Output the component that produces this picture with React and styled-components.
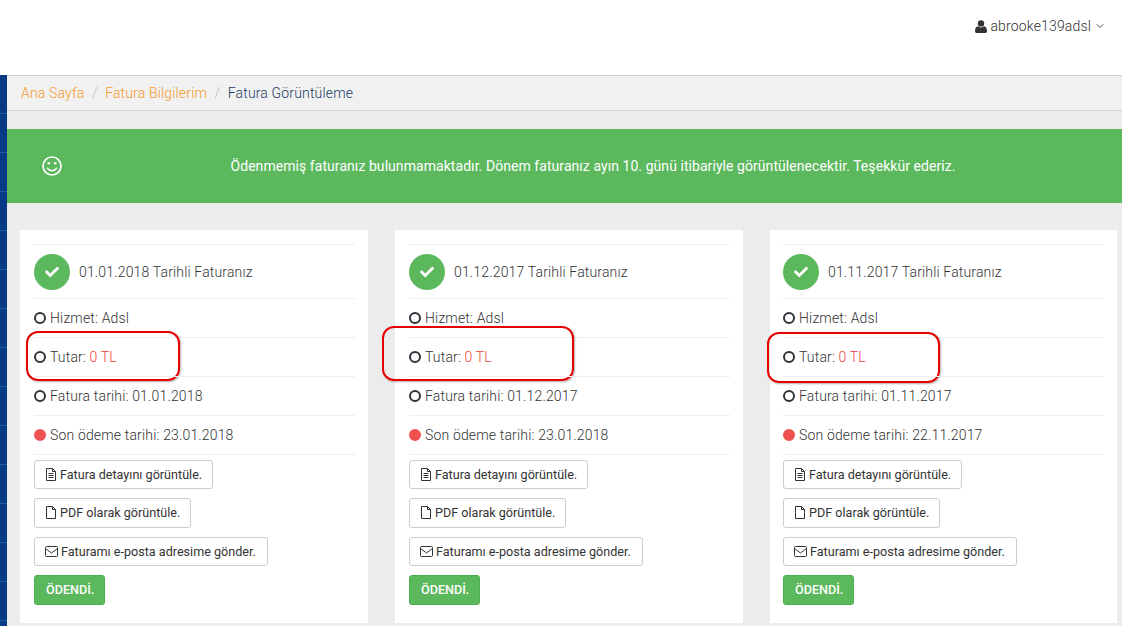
import React from 'react';
import styled, { createGlobalStyle } from 'styled-components';
import { FaCheck } from 'react-icons/fa';
import { ChevronDown } from 'lucide-react';

const invoices = [
  {
    title: '01.01.2018 Tarihli Faturanız',
    service: 'Adsl',
    amount: '0 TL',
    date: '01.01.2018',
    due: '23.01.2018',
    mark: { left: -8, top: -7, width: 154, height: 50 },
  },
  {
    title: '01.12.2017 Tarihli Faturanız',
    service: 'Adsl',
    amount: '0 TL',
    date: '01.12.2017',
    due: '23.01.2018',
    mark: { left: -27, top: -12, width: 192, height: 55 },
  },
  {
    title: '01.11.2017 Tarihli Faturanız',
    service: 'Adsl',
    amount: '0 TL',
    date: '01.11.2017',
    due: '22.11.2017',
    mark: { left: -16, top: -6, width: 173, height: 51 },
  },
];

function UserIcon() {
  return (
    <svg width="12" height="13" viewBox="0 0 12 13">
      <circle cx="6" cy="3.4" r="3.2" fill="#333" />
      <path d="M0 11.2C0 8.4 1 6.6 3 6.3c.8.7 1.8 1.1 3 1.1s2.2-.4 3-1.1c2 .3 3 2.1 3 4.9 0 1.1-.8 1.8-1.8 1.8H1.800C.8 13 0 12.300 0 11.200z" fill="#333" />
    </svg>
  );
}

function SmileIcon() {
  return (
    <svg width="20" height="20" viewBox="0 0 20 20" fill="none" stroke="#fff">
      <circle cx="10" cy="10" r="9" strokeWidth="1.7" />
      <circle cx="6.800" cy="7.300" r="1.300" fill="#fff" stroke="none" />
      <circle cx="13.200" cy="7.300" r="1.300" fill="#fff" stroke="none" />
      <path d="M5.300 12.200c1 1.600 2.700 2.500 4.700 2.500s3.700-.9 4.700-2.500" strokeWidth="1.500" strokeLinecap="round" />
    </svg>
  );
}

function FileTextIcon() {
  return (
    <svg width="12" height="13" viewBox="0 0 12 13" fill="none" stroke="#333">
      <path d="M1.500.5h6l3 3v9h-9z" />
      <path d="M7.500.5v3h3M3.500 5.500h5M3.500 7.500h5M3.500 9.500h5" />
    </svg>
  );
}

function FileIcon() {
  return (
    <svg width="12" height="13" viewBox="0 0 12 13" fill="none" stroke="#333">
      <path d="M1.500.5h6l3 3v9h-9z" />
      <path d="M7.500.5v3h3" />
    </svg>
  );
}

function EnvelopeIcon() {
  return (
    <svg width="13" height="11" viewBox="0 0 13 11" fill="none" stroke="#333">
      <rect x=".5" y=".5" width="12" height="10" rx="1" />
      <path d="M.5 2.500l6 4.500 6-4.500" />
    </svg>
  );
}

function App() {
  return (
    <>
      <GlobalStyle />
      <TopBar>
        <UserMenu>
          <UserIcon />
          abrooke139adsl
          <ChevronDown size={12} strokeWidth={1.7} color="#333" />
        </UserMenu>
      </TopBar>
      <Body>
        <Sidebar />
        <Main>
          <Breadcrumb>
            <Crumb>Ana Sayfa</Crumb>
            <Slash>/</Slash>
            <Crumb>Fatura Bilgilerim</Crumb>
            <Slash>/</Slash>
            <CurrentCrumb>Fatura Görüntüleme</CurrentCrumb>
          </Breadcrumb>
          <Alert>
            <SmileIcon />
            <AlertText>
              Ödenmemiş faturanız bulunmamaktadır. Dönem faturanız ayın 10. günü itibariyle görüntülenecektir. Teşekkür ederiz.
            </AlertText>
          </Alert>
          <Cards>
            {invoices.map((invoice) => (
              <Card key={invoice.title}>
                <CardHeader>
                  <CheckBadge><FaCheck size={14} /></CheckBadge>
                  {invoice.title}
                </CardHeader>
                <Row>
                  <Dot />
                  Hizmet: {invoice.service}
                </Row>
                <Row>
                  <Dot />
                  Tutar:&nbsp;<Amount>{invoice.amount}</Amount>
                  <Highlight {...invoice.mark} />
                </Row>
                <Row>
                  <Dot />
                  Fatura tarihi: {invoice.date}
                </Row>
                <Row>
                  <Dot $filled />
                  Son ödeme tarihi: {invoice.due}
                </Row>
                <Actions>
                  <ActionButton><FileTextIcon />Fatura detayını görüntüle.</ActionButton>
                  <ActionButton><FileIcon />PDF olarak görüntüle.</ActionButton>
                  <ActionButton><EnvelopeIcon />Faturamı e-posta adresime gönder.</ActionButton>
                  <PaidButton>ÖDENDİ.</PaidButton>
                </Actions>
              </Card>
            ))}
          </Cards>
        </Main>
      </Body>
    </>
  );
}

const GlobalStyle = createGlobalStyle`
  html, body {
    margin: 0;
    height: 626px;
    overflow: hidden;
    background: #ececec;
    font-family: Roboto, "Liberation Sans", sans-serif;
    font-size: 14px;
    font-weight: 300;
    letter-spacing: 0.16px;
    color: #333;
  }
  * {
    box-sizing: border-box;
  }
`;

const TopBar = styled.header`
  height: 75px;
  background: #fff;
  display: flex;
  justify-content: flex-end;
  padding: 19px 16px 0 0;
`;

const UserMenu = styled.div`
  display: flex;
  align-items: center;
  gap: 3px;
  height: 14px;
  color: #333;
  font-size: 14px;
`;

const Body = styled.div`
  display: flex;
  height: 551px;
`;

const Sidebar = styled.aside`
  width: 7px;
  flex: none;
  background: repeating-linear-gradient(to bottom, #063a84 0, #063a84 38px, #1a5bb0 38px, #1a5bb0 39px);
`;

const Main = styled.main`
  flex: 1;
  min-width: 0;
`;

const Breadcrumb = styled.nav`
  height: 36px;
  display: flex;
  align-items: center;
  padding: 0 14px;
  background: #f1f1f1;
  border-top: 1px solid #cfcfcf;
  border-bottom: 1px solid #cfcfcf;
`;

const Crumb = styled.a`
  color: #f59a2c;
`;

const CurrentCrumb = styled.span`
  color: #1c3a66;
`;

const Slash = styled.span`
  color: #bbb;
  padding: 0 7.5px;
`;

const Alert = styled.div`
  margin-top: 18px;
  height: 74px;
  background: #5cb85c;
  color: #fff;
  display: flex;
  align-items: center;
  padding-left: 35px;
`;

const AlertText = styled.div`
  flex: 1;
  text-align: center;
  font-weight: 400;
  letter-spacing: 0.06px;
  padding-left: 2px;
`;

const Cards = styled.div`
  display: grid;
  grid-template-columns: 348px 348px 347px;
  column-gap: 27px;
  padding: 27px 5px 0 13px;
`;

const Card = styled.section`
  background: #fff;
  height: 393px;
  padding: 14px 13px 0 14px;

  &:nth-child(3) {
    padding-left: 13px;
  }
`;

const CardHeader = styled.div`
  height: 54px;
  display: flex;
  align-items: center;
  gap: 9px;
  border-top: 1px solid #eee;
`;

const CheckBadge = styled.span`
  width: 36px;
  height: 36px;
  border-radius: 50%;
  background: #5cb85c;
  color: #fff;
  display: flex;
  align-items: center;
  justify-content: center;
`;

const Row = styled.div`
  position: relative;
  height: 39px;
  display: flex;
  align-items: center;
  border-top: 1px solid #eee;
  white-space: pre;
`;

const Dot = styled.i`
  width: 12px;
  height: 12px;
  margin-right: 4px;
  border-radius: 50%;
  border: 2px solid ${(props) => (props.$filled ? '#f05050' : '#2f343b')};
  background: ${(props) => (props.$filled ? '#f05050' : 'transparent')};
`;

const Amount = styled.span`
  color: #f03c3c;
`;

const Highlight = styled.span`
  position: absolute;
  left: ${(props) => props.left}px;
  top: ${(props) => props.top}px;
  width: ${(props) => props.width}px;
  height: ${(props) => props.height}px;
  border: 2px solid #e60000;
  border-radius: 12px;
  box-shadow: 1px 1px 2px rgba(0, 0, 0, 0.3);
  pointer-events: none;
`;

const Actions = styled.div`
  border-top: 1px solid #eee;
  padding-top: 5px;
  display: flex;
  flex-direction: column;
  align-items: flex-start;
  gap: 9px;
`;

const ActionButton = styled.button`
  height: 29px;
  padding: 0 10px;
  display: flex;
  align-items: center;
  gap: 3px;
  background: #fff;
  border: 1px solid #ccc;
  border-radius: 3px;
  color: #333;
  font-family: inherit;
  font-weight: 400;
  font-size: 12.6px;
  letter-spacing: 0;

  &:nth-child(2) {
    height: 30px;
    padding-bottom: 1px;
  }

  &:nth-child(3) {
    padding-right: 11px;
  }
`;

const PaidButton = styled.button`
  height: 30px;
  padding: 0 10px 1px 11px;
  background: #5cb85c;
  border: 1px solid #4cae4c;
  border-radius: 3px;
  color: #fff;
  font-family: inherit;
  font-size: 12.6px;
  font-weight: 500;
  letter-spacing: 0;
`;

export default App;
